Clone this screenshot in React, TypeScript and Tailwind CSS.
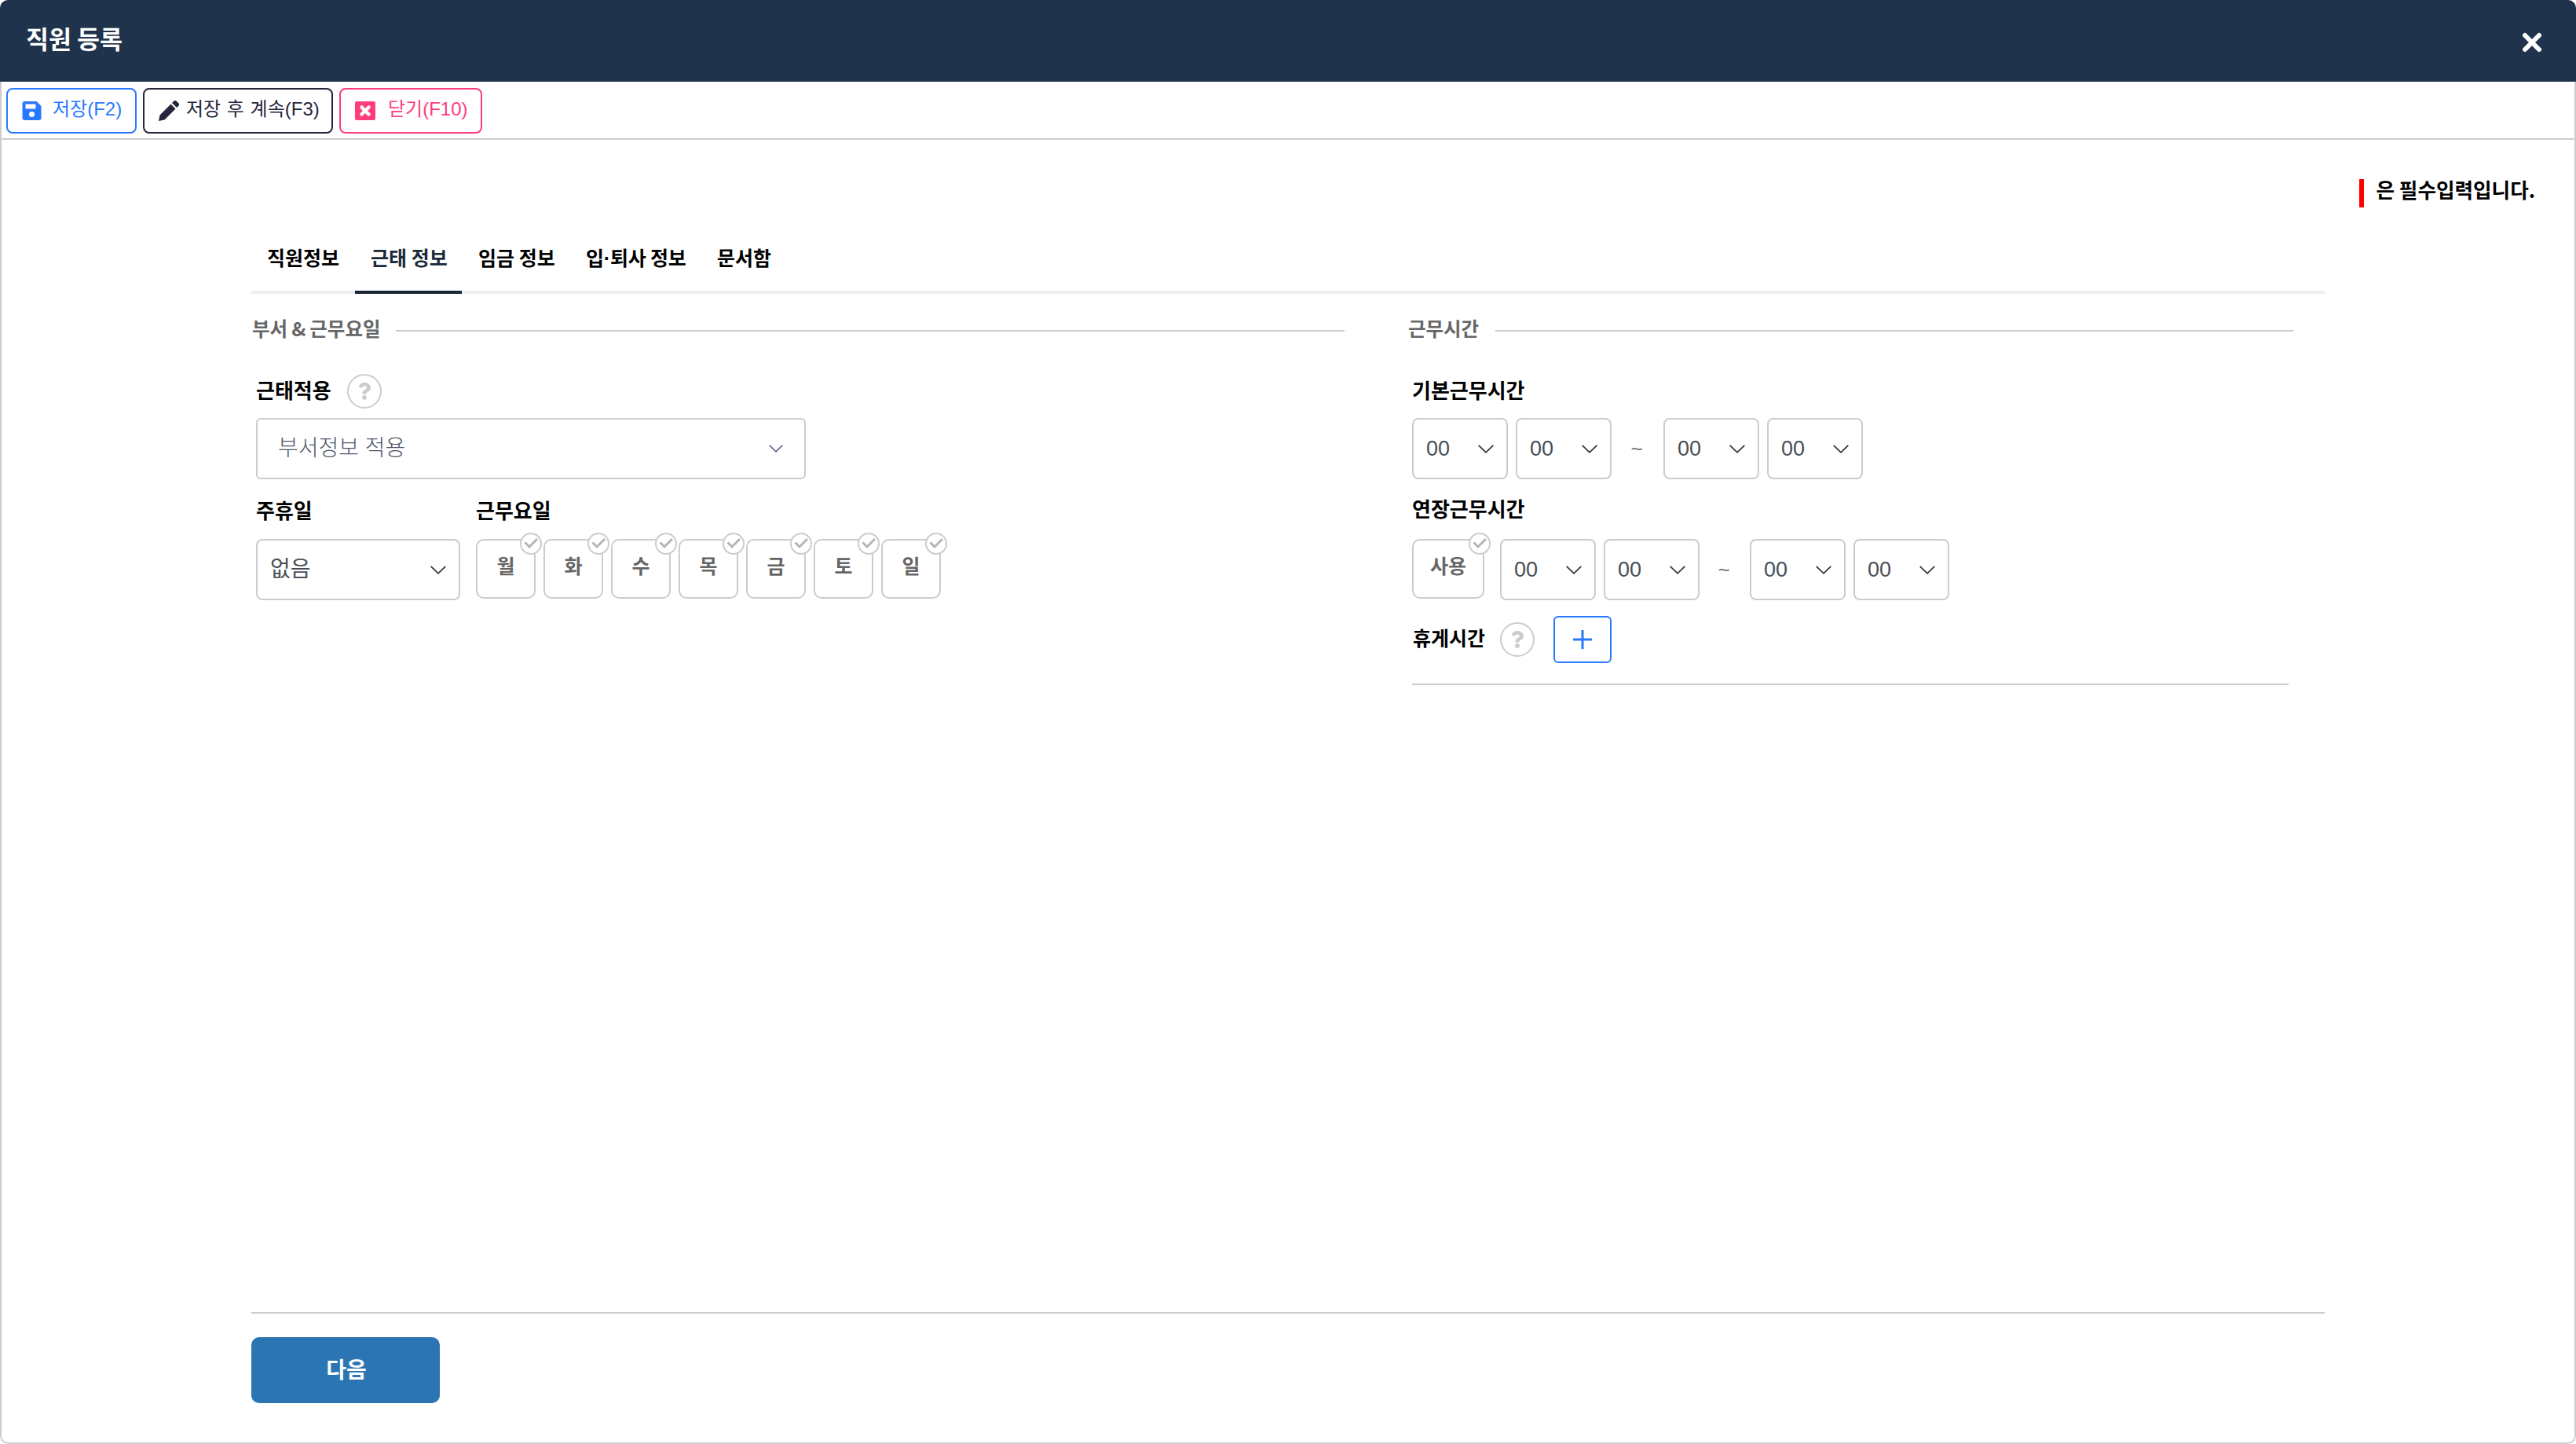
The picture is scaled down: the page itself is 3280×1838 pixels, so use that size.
import type { ReactNode } from 'react'
import { FaQuestion } from 'react-icons/fa'

const days = ['월', '화', '수', '목', '금', '토', '일']

const tabs: { label: ReactNode; width: string; active?: boolean }[] = [
    { label: '직원정보', width: 'w-[132px] pl-5' },
    { label: '근태 정보', width: 'w-[136px] pl-5', active: true },
    { label: '임금 정보', width: 'w-[136px] pl-[21px]' },
    {
        label: (
            <>
                입<span className="font-['Liberation_Sans',sans-serif]">·</span>퇴사 정보
            </>
        ),
        width: 'w-[168px] pl-[22px] tracking-[-0.2px]',
    },
    { label: '문서함', width: 'w-[110px] pl-[21px]' },
]

function Chevron({ className = '' }: { className?: string }) {
    return (
        <svg viewBox="0 0 20 11" className={`shrink-0 ${className}`} fill="none" stroke="currentColor" strokeWidth="1.8">
            <path d="M0.7 0.8 10 9.8l9.3-9" />
        </svg>
    )
}

function Select({ value, className }: { value: string; className: string }) {
    return (
        <button className={`h-[78px] flex items-center justify-between px-4 border-2 border-[#ccc] rounded-lg bg-white leading-none text-[#495057] font-['Liberation_Sans','Noto_Sans_CJK_KR',sans-serif] ${className}`}>
            <span>{value}</span>
            <Chevron className="w-5 h-[11px] text-[#343a40]" />
        </button>
    )
}

function Toggle({ label, className }: { label: string; className: string }) {
    return (
        <button className={`relative h-[76px] border-2 border-[#ccc] rounded-[10px] text-[25px] leading-none font-bold text-[#666] pb-[10px] ${className}`}>
            {label}
            <span className="absolute -top-[10px] -right-[10px] size-7 rounded-full border-2 border-[#ccc] bg-white">
                <svg viewBox="0 0 24 24" className="size-6" fill="none" stroke="#b5b5b5" strokeWidth="3">
                    <path d="M4.500 10.500 10 16 20 6" />
                </svg>
            </span>
        </button>
    )
}

function Help() {
    return (
        <span className="size-11 rounded-full border-2 border-[#ccc] flex items-center justify-center text-[#ccc]">
            <FaQuestion className="size-[22px]" />
        </span>
    )
}

function Label({ children }: { children: ReactNode }) {
    return <span className="pb-1 text-[26px] leading-[34px] font-bold text-black">{children}</span>
}

function SectionTitle({ children, className }: { children: ReactNode; className: string }) {
    return (
        <div className="h-9 flex items-center text-[24.5px] leading-8 font-bold text-[#666]">
            <span className={`pl-px pb-[3px] whitespace-nowrap [word-spacing:-0.5px] ${className}`}>{children}</span>
            <span className="flex-1 h-0.5 bg-[#ccc] mt-1" />
        </div>
    )
}

function TimeRange({ gap }: { gap: string }) {
    return (
        <div className="flex items-center">
            <Select value="00" className="w-[122px] text-[27px]" />
            <Select value="00" className="w-[122px] ml-[10px] text-[27px]" />
            <span className={`${gap} pr-0.5 text-center text-[26px] leading-none text-[#6c757d] font-['Liberation_Sans',sans-serif]`}>~</span>
            <Select value="00" className="w-[122px] text-[27px]" />
            <Select value="00" className="w-[122px] ml-[10px] text-[27px]" />
        </div>
    )
}

export default function App() {
    return (
        <div className="w-[3280px] h-[1838px] flex flex-col bg-white rounded-[10px] overflow-hidden font-['Noto_Sans_CJK_KR','Liberation_Sans',sans-serif]">
            <header className="h-[104px] shrink-0 flex items-center justify-between pl-[33px] pr-[43px] bg-[#1f344c] text-white">
                <h1 className="text-[31.5px] leading-none font-bold pb-1.5">직원 등록</h1>
                <svg viewBox="0 0 26 26" className="size-[26px] mt-1" stroke="currentColor" strokeWidth="6" strokeLinecap="round">
                    <path d="M4 4l18 18M22 4 4 22" />
                </svg>
            </header>

            <div className="flex-1 flex flex-col border-2 border-t-0 border-[#ccc] rounded-b-[10px]">
                <div className="h-[74px] shrink-0 flex items-start gap-2 pl-1.5 pt-2 border-b-2 border-[#ccc] text-[24px] leading-none font-['Liberation_Sans','Noto_Sans_CJK_KR',sans-serif]">
                    <button className="w-[166px] h-[58px] flex items-center pl-[18px] border-2 border-[#2979ff] rounded-lg text-[#2979ff]">
                        <svg viewBox="0 0 24 24" className="w-[25px] h-6 mr-[14px]" fill="currentColor">
                            <path fillRule="evenodd" d="M3 0h15l6 6v15a3 3 0 0 1-3 3H3a3 3 0 0 1-3-3V3a3 3 0 0 1 3-3zM4 3.500v6h13v-6zM12 13a3.500 3.500 0 1 0 0 7 3.500 3.500 0 0 0 0-7z" />
                        </svg>
                        <span className="pb-1">저장(F2)</span>
                    </button>
                    <button className="w-[242px] h-[58px] flex items-center pl-[18px] border-2 border-[#25253c] rounded-lg text-[#25253c]">
                        <svg viewBox="0 0 26 26" className="size-[26px] mr-[9px]" fill="currentColor">
                            <path d="M0 26l1.500-7.500L15.500 4.500l6 6L7.500 24.500zM17 3l2.300-2.300a2.400 2.400 0 0 1 3.400 0l2.600 2.600a2.400 2.400 0 0 1 0 3.400L23 9z" />
                        </svg>
                        <span className="pb-1 whitespace-nowrap [word-spacing:1px]">저장 후 계속(F3)</span>
                    </button>
                    <button className="w-[182px] h-[58px] flex items-center pl-[18px] border-2 border-[#ff3d7b] rounded-lg text-[#ff3d7b]">
                        <svg viewBox="0 0 26 24" className="w-[26px] h-6 mr-4">
                            <rect width="26" height="24" rx="2" fill="currentColor" />
                            <path d="M8.500 7.500l9 9M17.500 7.500l-9 9" stroke="#fff" strokeWidth="4.500" strokeLinecap="round" />
                        </svg>
                        <span className="pb-1">닫기(F10)</span>
                    </button>
                </div>

                <div className="h-[86px] shrink-0 flex justify-end items-end pr-[50px]">
                    <div className="h-9 pl-4 border-l-6 border-[#f00] text-[25.6px] leading-[25px] font-bold text-black">은 필수입력입니다.</div>
                </div>

                <main className="w-[2640px] ml-[318px] flex flex-col">
                    <nav className="h-[110px] flex items-end border-b-4 border-[#eee]">
                        {tabs.map((tab, i) => (
                            <div
                                key={i}
                                className={`h-[90px] -mb-1 pt-[25px] text-[25px] leading-9 font-bold whitespace-nowrap border-b-4 ${tab.width} ${
                                    tab.active ? 'text-[#1b2a3a] border-[#182735]' : 'text-black border-transparent'
                                }`}
                            >
                                {tab.label}
                            </div>
                        ))}
                    </nav>

                    <div className="h-[1298px] pt-[27px] flex border-b-2 border-[#ccc]">
                        <section className="w-[1392px]">
                            <SectionTitle className="w-[184px]">부서 & 근무요일</SectionTitle>
                            <div className="pl-1.5 pt-[39px]">
                                <div className="h-11 flex items-center gap-5">
                                    <Label>근태적용</Label>
                                    <Help />
                                </div>
                                <button className="mt-3 w-[700px] h-[78px] flex items-center justify-between pl-[26px] pr-[27px] border-2 border-[#ccc] rounded-md text-[28px] leading-none font-light text-[#4f566b] font-['Liberation_Sans','Noto_Sans_CJK_KR',sans-serif]">
                                    <span>부서정보 적용</span>
                                    <Chevron className="w-[18px] h-[10px] text-[#5a6080]" />
                                </button>
                                <div className="mt-[22px] flex gap-5">
                                    <div className="w-[260px] flex flex-col gap-4">
                                        <Label>주휴일</Label>
                                        <Select value="없음" className="w-[260px] text-[28px]" />
                                    </div>
                                    <div className="flex flex-col gap-4">
                                        <Label>근무요일</Label>
                                        <div className="flex gap-[10px]">
                                            {days.map(day => (
                                                <Toggle key={day} label={day} className="w-[76px]" />
                                            ))}
                                        </div>
                                    </div>
                                </div>
                            </div>
                        </section>

                        <section className="w-[1128px] ml-20">
                            <SectionTitle className="w-28">근무시간</SectionTitle>
                            <div className="w-[1116px] ml-1.5 pt-[39px]">
                                <div className="h-11 flex items-center">
                                    <Label>기본근무시간</Label>
                                </div>
                                <div className="mt-3">
                                    <TimeRange gap="w-[66px]" />
                                </div>
                                <div className="mt-5 flex flex-col gap-[18px]">
                                    <Label>연장근무시간</Label>
                                    <div className="flex gap-5">
                                        <Toggle label="사용" className="w-[92px]" />
                                        <TimeRange gap="w-16" />
                                    </div>
                                </div>
                                <div className="mt-5 h-[60px] flex items-center">
                                    <span className="w-[112px] pl-px pb-1.5 text-[25px] leading-8 font-bold text-black">휴게시간</span>
                                    <Help />
                                    <button className="ml-6 w-[74px] h-[60px] flex items-center justify-center border-2 border-[#2979ff] rounded-md text-[#2979ff]">
                                        <svg viewBox="0 0 24 24" className="size-6" stroke="currentColor" strokeWidth="3">
                                            <path d="M0 12h24M12 0v24" />
                                        </svg>
                                    </button>
                                </div>
                                <div className="mt-[26px] h-0.5 bg-[#ccc]" />
                            </div>
                        </section>
                    </div>

                    <button className="mt-[30px] w-60 h-[84px] rounded-[10px] bg-[#2b75b3] text-[28px] leading-none font-bold text-white pl-0.5 pb-1">
                        다음
                    </button>
                </main>
            </div>
        </div>
    )
}
